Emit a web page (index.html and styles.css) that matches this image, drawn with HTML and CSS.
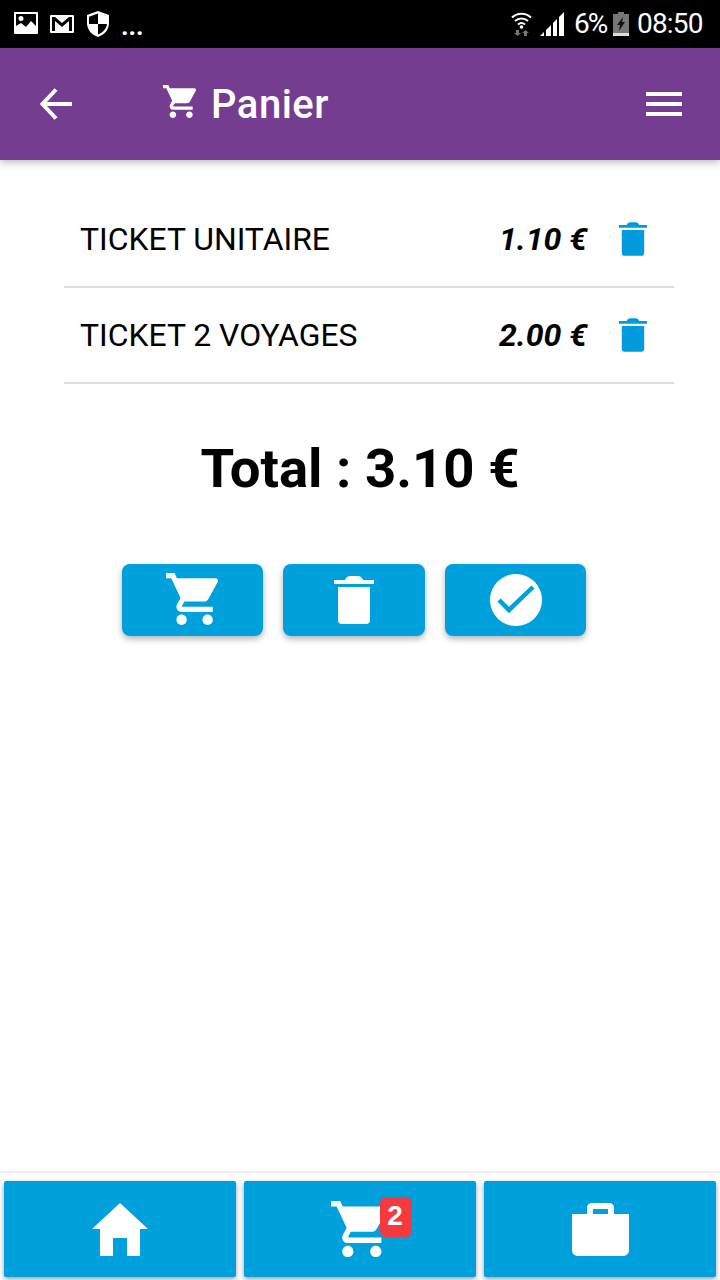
FILE: index.html
```html
<!DOCTYPE html>
<html lang="fr">
<head>
    <meta charset="UTF-8">
    <meta name="viewport" content="width=device-width, initial-scale=1.0">
    <title>Panier</title>
    <link rel="stylesheet" href="styles.css">
</head>
<body>
    <svg class="icon-defs" width="0" height="0">
        <symbol id="cart" viewBox="1 2 20 20">
            <path d="M7 18c-1.1 0-1.99.9-1.99 2S5.9 22 7 22s2-.9 2-2-.9-2-2-2zM1 2v2h2l3.6 7.59-1.35 2.45c-.16.28-.25.61-.25.96 0 1.1.9 2 2 2h12v-2H7.42c-.14 0-.25-.11-.25-.25l.03-.12.9-1.63h7.45c.75 0 1.41-.41 1.75-1.03l3.58-6.49c.08-.14.12-.31.12-.48 0-.55-.45-1-1-1H5.21l-.94-2H1zm16 16c-1.1 0-1.99.9-1.99 2s.89 2 1.99 2 2-.9 2-2-.9-2-2-2z"/>
        </symbol>
        <symbol id="trash" viewBox="0 0 40 48">
            <path d="M0 4h11c1-2.500 3-4 5-4h8c2 0 4 1.500 5 4h11v4H0zM4 11h32v33c0 2.500-1.500 4-4 4H8c-2.500 0-4-1.500-4-4z"/>
        </symbol>
    </svg>

    <div class="status-bar">
        <svg class="st-image" viewBox="0 0 24 22"><path fill-rule="evenodd" d="M1 0h22a1 1 0 0 1 1 1v20a1 1 0 0 1-1 1H1a1 1 0 0 1-1-1V1a1 1 0 0 1 1-1zM2 2v12l5-3 5 4 5-6 5 5V2zM7 4a2.500 2.500 0 1 1 0 5 2.500 2.500 0 0 1 0-5z"/></svg>
        <svg class="st-mail" viewBox="0 0 24 18"><path fill-rule="evenodd" d="M1 0h22a1 1 0 0 1 1 1v16a1 1 0 0 1-1 1H1a1 1 0 0 1-1-1V1a1 1 0 0 1 1-1zM2 2v14h3V6l7 6 7-6v10h3V2h-3l-7 6-7-6z"/></svg>
        <svg class="st-shield" viewBox="0 0 22 26"><path fill-rule="evenodd" d="M11 0l11 4v8c0 7-5 12-11 14C5 24 0 19 0 12V4zM11 2.500L2 5.700V13h9zM11 13v10.500c4.500-1.700 8.500-5.500 9-10.500z"/></svg>
        <span class="st-dots">...</span>
        <svg class="st-wifi" viewBox="0 0 21 24">
            <path fill="none" stroke="#fff" stroke-width="2" d="M1 5.500c5.500-5 13.500-5 19 0M4 9c3.800-3.300 9.200-3.300 13 0M7 12.500c2.100-1.800 4.900-1.800 7 0"/>
            <circle cx="10.500" cy="15" r="1.800" fill="#fff"/>
            <path fill="#777" d="M5 18h3v3h2l-3.500 3L3 21h2zM13 24v-3h-2l3.500-3 3.500 3h-2v3z"/>
        </svg>
        <svg class="st-signal" viewBox="0 0 24 24"><path d="M0 24l4-4v4zM6 24v-6l5-5v11zM13 24V11l4-4v17zM19 24V5l5-5v24z"/></svg>
        <span class="st-text st-percent">6%</span>
        <svg class="st-battery" viewBox="0 0 16 24">
            <path fill="#777" d="M5 0h6v2h5v19H0V2h5z"/>
            <path fill="#ddd" d="M0 21h16v3H0z"/>
            <path fill="#111" d="M10 5L4 13h3l-1 6 6-9H9z"/>
        </svg>
        <span class="st-text st-time">08:50</span>
    </div>

    <header class="app-header">
        <svg class="back-icon" viewBox="0 0 32 32"><path fill="none" stroke="#fff" stroke-width="4" d="M32 16H3M16 1.500L2.500 16 16 30.500"/></svg>
        <h1 class="title">
            <svg class="title-icon"><use href="#cart"/></svg>
            <span class="title-text">Panier</span>
        </h1>
        <div class="menu-icon"><span></span><span></span><span></span></div>
    </header>

    <main class="content">
        <div class="cart-list">
            <div class="cart-row">
                <span class="item-name">TICKET UNITAIRE</span>
                <span class="item-price">1.10 €</span>
                <svg class="item-delete"><use href="#trash"/></svg>
            </div>
            <div class="cart-row">
                <span class="item-name">TICKET 2 VOYAGES</span>
                <span class="item-price">2.00 €</span>
                <svg class="item-delete"><use href="#trash"/></svg>
            </div>
        </div>

        <div class="total">Total : 3.10 €</div>

        <div class="actions">
            <button class="action-btn"><svg class="action-cart"><use href="#cart"/></svg></button>
            <button class="action-btn action-wide"><svg class="action-trash"><use href="#trash"/></svg></button>
            <button class="action-btn">
                <svg class="action-check" viewBox="0 0 52 52">
                    <circle cx="26" cy="26" r="26" fill="#fff"/>
                    <path fill="none" stroke="#00a0dc" stroke-width="4.500" d="M9 26l10 10 24-23"/>
                </svg>
            </button>
        </div>
    </main>

    <footer class="bottom-nav">
        <button class="nav-btn">
            <svg class="nav-home" viewBox="0 0 56 53"><path d="M28 0l28 26H48v27H35V35H21v18H8V26H0z"/></svg>
        </button>
        <button class="nav-btn">
            <span class="nav-cart">
                <svg class="nav-cart-icon"><use href="#cart"/></svg>
                <span class="badge">2</span>
            </span>
        </button>
        <button class="nav-btn">
            <svg class="nav-case" viewBox="0 0 57 53"><path fill-rule="evenodd" d="M20 0h17c3 0 5 2 5 5v6h15v36c0 3.500-2.500 6-6 6H6c-3.500 0-6-2.500-6-6V11h15V5c0-3 2-5 5-5zm1 6v5h15V6z"/></svg>
        </button>
    </footer>
</body>
</html>
```

FILE: styles.css
```css
* {
    box-sizing: border-box;
}

body {
    font-family: Roboto, "Liberation Sans", sans-serif;
    margin: 0;
    height: 1280px;
    display: flex;
    flex-direction: column;
    background-color: #fff;
    color: #000;
    overflow: hidden;
}

svg {
    display: block;
    fill: currentColor;
    flex: none;
}

.icon-defs {
    position: absolute;
}

/* status bar */
.status-bar {
    height: 48px;
    background-color: #000;
    color: #fff;
    display: flex;
    align-items: center;
    padding-left: 14px;
}

.st-image {
    width: 24px;
    height: 22px;
    margin-top: -2px;
}

.st-mail {
    width: 24px;
    height: 18px;
    margin-left: 12px;
}

.st-shield {
    width: 22px;
    height: 26px;
    margin-left: 13px;
    margin-top: -1px;
}

.st-dots {
    font-size: 26px;
    font-weight: 700;
    line-height: 48px;
    margin-left: 12px;
    margin-top: 3px;
    width: 22px;
}

.st-wifi {
    width: 21px;
    height: 24px;
    margin-left: auto;
}

.st-signal {
    width: 24px;
    height: 24px;
    margin-left: 8px;
}

.st-text {
    font-size: 28px;
    line-height: 48px;
    letter-spacing: -0.8px;
}

.st-percent {
    margin-left: 10px;
    width: 33px;
    letter-spacing: -2px;
}

.st-battery {
    width: 16px;
    height: 24px;
    margin-left: 6px;
}

.st-time {
    margin-left: 8px;
    margin-right: 16px;
    width: 67px;
}

/* header */
.app-header {
    height: 112px;
    background-color: #753d8f;
    color: #fff;
    display: flex;
    align-items: center;
    padding: 0 38px 0 40px;
    box-shadow: 0 2px 8px rgba(0, 0, 0, 0.3);
    position: relative;
}

.back-icon {
    width: 32px;
    height: 32px;
}

.title {
    display: flex;
    align-items: center;
    margin: 0 0 0 91px;
    font-size: 40px;
    font-weight: 500;
    letter-spacing: 0.5px;
    line-height: 48px;
}

.title-icon {
    width: 33px;
    height: 33px;
    margin-right: 15px;
    margin-top: -6px;
}

.title-text {
    margin-top: 2px;
}

.menu-icon {
    margin-left: auto;
    width: 36px;
    display: flex;
    flex-direction: column;
    gap: 6px;
}

.menu-icon span {
    display: block;
    height: 4px;
    background-color: #fff;
}

/* cart */
.content {
    flex: 1;
    padding-top: 32px;
}

.cart-list {
    margin: 0 46px 0 64px;
}

.cart-row {
    height: 96px;
    display: flex;
    align-items: center;
    padding: 0 27px 0 16px;
    border-bottom: 2px solid #ddd;
}

.item-name {
    flex: 1;
    font-size: 31.9px;
}

.item-price {
    font-size: 32px;
    font-weight: 700;
    font-style: italic;
}

.item-delete {
    width: 28px;
    height: 34px;
    margin-left: 32px;
    color: #009bdc;
}

.total {
    margin-top: 44px;
    font-size: 54.5px;
    font-weight: 700;
    line-height: 80px;
    text-align: center;
}

.actions {
    display: flex;
    gap: 20px;
    margin-top: 56px;
    padding-left: 122px;
}

.action-btn {
    width: 141px;
    height: 72px;
    padding: 0;
    border: none;
    border-radius: 8px;
    background-color: #00a0dc;
    color: #fff;
    display: flex;
    align-items: center;
    justify-content: center;
    box-shadow: 0 3px 6px rgba(0, 0, 0, 0.3);
}

.action-wide {
    width: 142px;
}

.action-cart {
    width: 52px;
    height: 52px;
    margin: -2px 2px 0 0;
}

.action-trash {
    width: 40px;
    height: 48px;
}

.action-check {
    width: 52px;
    height: 52px;
}

/* bottom nav */
.bottom-nav {
    height: 109px;
    border-top: 2px solid #f1eded;
    display: flex;
    gap: 8px;
    padding: 8px 4px 0;
}

.nav-btn {
    flex: 1;
    height: 96px;
    padding: 0;
    border: none;
    border-radius: 2px;
    background-color: #00a0dc;
    color: #fff;
    display: flex;
    align-items: center;
    justify-content: center;
    box-shadow: 0 2px 5px rgba(0, 0, 0, 0.4);
}

.nav-home {
    width: 56px;
    height: 53px;
}

.nav-cart {
    position: relative;
    display: block;
    width: 56px;
    height: 56px;
    margin-left: -2px;
}

.nav-cart-icon {
    width: 56px;
    height: 56px;
}

.badge {
    position: absolute;
    top: -4px;
    left: 49px;
    width: 32px;
    height: 40px;
    padding-right: 2px;
    border-radius: 6px;
    background-color: #f4393f;
    color: #fff;
    font-size: 28px;
    font-weight: 700;
    line-height: 38px;
    text-align: center;
}

.nav-case {
    width: 57px;
    height: 53px;
}
```
